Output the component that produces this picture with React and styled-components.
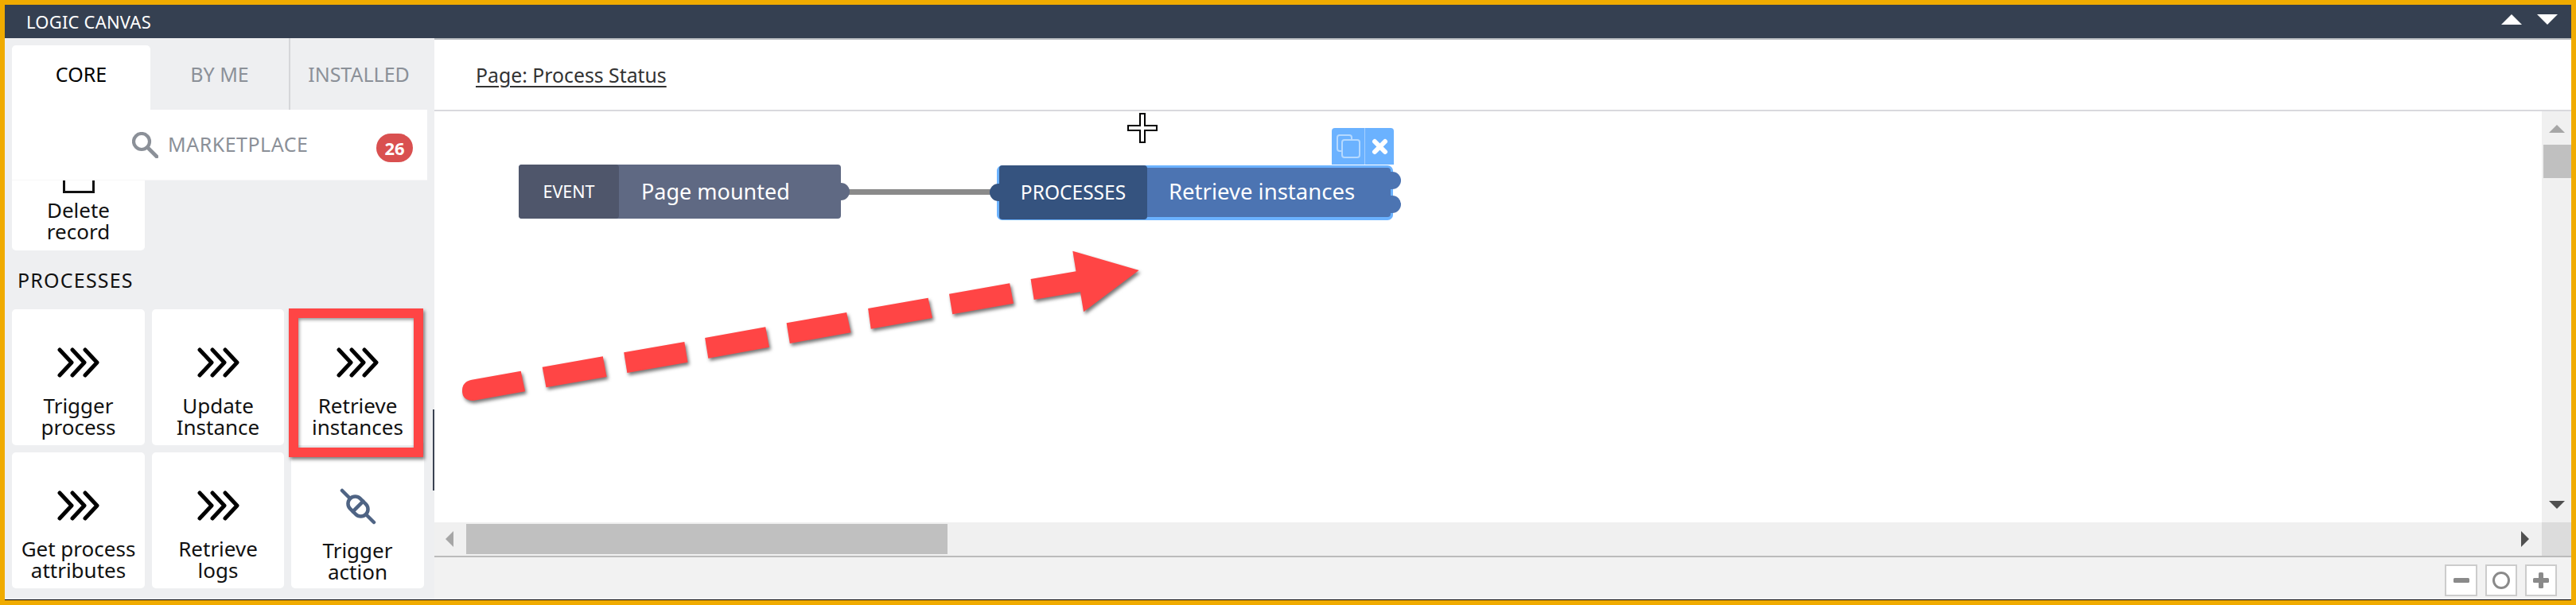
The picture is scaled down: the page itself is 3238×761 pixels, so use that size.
import React from 'react';
import styled, { createGlobalStyle } from 'styled-components';

const GlobalStyle = createGlobalStyle`
  html, body {
    margin: 0;
    padding: 0;
    background: #fff;
  }
  body {
    font-family: "Noto Sans", "Liberation Sans", sans-serif;
  }
`;

const Frame = styled.div`
  position: relative;
  box-sizing: border-box;
  width: 3238px;
  height: 761px;
  border: 6px solid #f0ab00;
  display: flex;
  flex-direction: column;
  overflow: hidden;
`;

const Header = styled.header`
  flex: 0 0 42px;
  background: #354051;
  color: #fff;
  display: flex;
  align-items: center;
  justify-content: space-between;
  padding: 0 17px 0 27px;
  font-size: 22px;
  letter-spacing: 0.2px;
`;

const HeaderArrows = styled.div`
  display: flex;
  gap: 19px;
  margin-top: -6px;
`;

const Tri = styled.span`
  display: block;
  width: 0;
  height: 0;
  border-left: 13px solid transparent;
  border-right: 13px solid transparent;
  ${(p) => (p.$down ? 'border-top: 13px solid #fff;' : 'border-bottom: 13px solid #fff;')}
`;

const Body = styled.div`
  flex: 1;
  display: flex;
  min-height: 0;
  border-bottom: 1px solid #000;
`;

const Sidebar = styled.aside`
  position: relative;
  flex: 0 0 540px;
  background: #eeeff1;
  display: flex;
  flex-direction: column;
  overflow: hidden;
`;

const TabRow = styled.div`
  flex: 0 0 90px;
  display: flex;
  margin-left: 9px;
  width: 522px;
`;

const Tab = styled.div`
  box-sizing: border-box;
  width: ${(p) => p.$width}px;
  display: flex;
  align-items: center;
  justify-content: center;
  font-size: 25px;
  color: ${(p) => (p.$active ? '#000' : '#8b9098')};
  ${(p) => p.$active && 'background: #fff; margin-top: 9px; border-radius: 5px 5px 0 0; padding-bottom: 9px;'}
  ${(p) => p.$divider && 'border-right: 2px solid #d5d6d9;'}
`;

const SearchPanel = styled.div`
  flex: 0 0 89px;
  position: relative;
  z-index: 1;
  margin-left: 9px;
  width: 522px;
  background: #fff;
  display: flex;
  align-items: center;
  padding-left: 151px;
  box-sizing: border-box;
  border-bottom: 1px solid #f7f7f8;
  color: #8b9098;
  font-size: 25px;
`;

const SearchLabel = styled.span`
  margin-left: 12px;
  margin-top: -2px;
  letter-spacing: 0.5px;
`;

const Badge = styled.span`
  margin: 7px 18px 0 auto;
  width: 46px;
  height: 36px;
  border-radius: 18px;
  background: #d95050;
  color: #fff;
  font-size: 22px;
  font-weight: 700;
  display: flex;
  align-items: center;
  justify-content: center;
`;

const List = styled.div`
  flex: 1;
  min-height: 0;
  overflow: hidden;
  padding: 0 4px 0 9px;
`;

const Grid = styled.div`
  display: grid;
  grid-template-columns: 167px 166px 167px;
  gap: 9px;
  ${(p) => p.$scrolled && 'margin-top: -83px;'}
`;

const SectionLabel = styled.div`
  height: 74px;
  display: flex;
  align-items: center;
  padding-left: 7px;
  font-size: 25px;
  letter-spacing: 1.2px;
  color: #111;
`;

const Card = styled.div`
  position: relative;
  height: 171px;
  background: #fff;
  border-radius: 5px;
  display: flex;
  flex-direction: column;
  align-items: center;
  box-sizing: border-box;
  padding-top: ${(p) => p.$top || 47}px;
`;

const CardLabel = styled.div`
  margin-top: ${(p) => p.$gap || 21}px;
  width: 100%;
  text-align: center;
  font-size: 26px;
  line-height: 27px;
  color: #111;
  white-space: pre-line;
`;

const Highlight = styled.div`
  position: absolute;
  left: -3px;
  top: -1px;
  width: 169px;
  height: 187px;
  box-sizing: border-box;
  border: 12.5px solid #ff4545;
  box-shadow: 2px 3px 4px rgba(0, 0, 0, 0.5), inset 1px 2px 4px rgba(0, 0, 0, 0.45);
  z-index: 2;
`;

const SideThumb = styled.div`
  position: absolute;
  right: 0;
  top: 467px;
  width: 2px;
  height: 102px;
  background: #3a4252;
`;

const Main = styled.main`
  flex: 1;
  min-width: 0;
  display: flex;
  flex-direction: column;
  border-top: 2px solid #b9bcc0;
`;

const TopBar = styled.div`
  flex: 0 0 88px;
  border-bottom: 2px solid #d9d9dd;
  display: flex;
  align-items: center;
  padding-left: 52px;
`;

const PageLink = styled.a`
  font-size: 24.8px;
  color: #333;
  text-decoration: underline;
  text-decoration-thickness: 2px;
  text-underline-offset: 4px;
`;

const CanvasRow = styled.div`
  flex: 0 0 517px;
  display: flex;
  min-height: 0;
`;

const Canvas = styled.div`
  position: relative;
  flex: 1;
  background: #fff;
`;

const VScroll = styled.div`
  flex: 0 0 37px;
  background: #f0f0f0;
  display: flex;
  flex-direction: column;
  align-items: center;
  padding-top: 17px;
  box-sizing: border-box;
`;

const ArrowV = styled.span`
  display: block;
  width: 0;
  height: 0;
  border-left: 10px solid transparent;
  border-right: 10px solid transparent;
  ${(p) => (p.$down ? 'border-top: 10px solid #505050;' : 'border-bottom: 10px solid #a6a6a6;')}
  ${(p) => p.$down && 'margin-top: auto; margin-bottom: 17px;'}
`;

const VThumb = styled.div`
  align-self: flex-end;
  width: 35px;
  height: 42px;
  margin-top: 15px;
  background: #c0c0c0;
`;

const HScroll = styled.div`
  flex: 0 0 44px;
  box-sizing: border-box;
  background: #f0f0f0;
  border-bottom: 2px solid #bbb;
  display: flex;
  align-items: center;
`;

const ArrowH = styled.span`
  display: block;
  width: 0;
  height: 0;
  border-top: 10px solid transparent;
  border-bottom: 10px solid transparent;
  ${(p) => (p.$right ? 'border-left: 10px solid #505050;' : 'border-right: 10px solid #a6a6a6;')}
`;

const HThumb = styled.div`
  width: 605px;
  height: 38px;
  margin-left: 16px;
  background: #c0c0c0;
`;

const HTrack = styled.div`
  flex: 1;
  display: flex;
  align-items: center;
  padding-left: 14px;
`;

const HRight = styled.div`
  margin-left: auto;
  margin-right: 16px;
`;

const Corner = styled.div`
  flex: 0 0 37px;
  height: 100%;
  background: #dcdcdc;
`;

const ZoomBar = styled.div`
  flex: 1;
  background: #f2f2f2;
  display: flex;
  justify-content: flex-end;
  align-items: flex-start;
  gap: 10px;
  padding: 9px 18px 0 0;
`;

const ZoomButton = styled.button`
  box-sizing: border-box;
  width: ${(p) => p.$width || 40}px;
  height: 40px;
  padding: 0;
  background: #fff;
  border: 2px solid #ccc;
  display: flex;
  align-items: center;
  justify-content: center;
`;

const Node = styled.div`
  position: absolute;
  left: ${(p) => p.$x}px;
  top: ${(p) => p.$y}px;
  width: ${(p) => p.$w}px;
  height: ${(p) => p.$h}px;
  box-sizing: border-box;
  display: flex;
  align-items: stretch;
  color: #fff;
  background: ${(p) => p.$bg};
  border-radius: 4px;
  ${(p) => p.$selected && 'box-shadow: 0 0 0 3px #6bb2ff, 0 1px 0 3px #6bb2ff;'}
`;

const NodeTag = styled.div`
  flex: 0 0 ${(p) => p.$w}px;
  margin: ${(p) => p.$inset || 0}px 0;
  padding-bottom: 2px;
  display: flex;
  align-items: center;
  justify-content: center;
  background: ${(p) => p.$bg};
  border-radius: 4px;
  font-size: ${(p) => p.$size || 21.5}px;
`;

const NodeTitle = styled.div`
  display: flex;
  align-items: center;
  padding: 0 0 ${(p) => p.$lift}px ${(p) => p.$pad}px;
  font-size: ${(p) => p.$size}px;
  white-space: nowrap;
`;

const Port = styled.span`
  position: absolute;
  top: ${(p) => p.$top}px;
  width: 13px;
  height: 22px;
  background: ${(p) => p.$bg};
  ${(p) =>
    p.$left
      ? 'left: -12px; border-radius: 11px 0 0 11px;'
      : `right: -${p.$out || 13}px; border-radius: 0 11px 11px 0;`}
`;

const Wire = styled.div`
  position: absolute;
  left: 520px;
  top: 98px;
  width: 190px;
  height: 7px;
  background: #8a8a8a;
`;

const NodeTools = styled.div`
  position: absolute;
  left: 1128px;
  top: 21px;
  width: 78px;
  height: 46px;
  background: #6bb2ff;
  border-radius: 4px 4px 0 0;
  display: flex;
`;

const NodeTool = styled.div`
  flex: ${(p) => p.$grow};
  display: flex;
  align-items: center;
  justify-content: center;
  ${(p) => p.$divider && 'border-right: 1px solid #a5d0ff;'}
`;

const Crosshair = styled.svg`
  position: absolute;
  left: 871px;
  top: 2px;
`;

const ArrowOverlay = styled.svg`
  position: absolute;
  left: 524px;
  top: 294px;
  z-index: 3;
  pointer-events: none;
  filter: drop-shadow(2px 3px 2px rgba(0, 0, 0, 0.55));
`;

const Chevrons = () => (
  <svg width="53" height="38" viewBox="0 0 53 38" fill="none" stroke="#000" strokeWidth="5" strokeLinecap="round" strokeLinejoin="round">
    <polyline points="3,3 18,19 3,35" />
    <polyline points="19,3 34,19 19,35" />
    <polyline points="35,3 50,19 35,35" />
  </svg>
);

const PlugIcon = () => (
  <svg width="46" height="46" viewBox="0 0 46 46" fill="none" stroke="#4f6484" strokeWidth="4.5" strokeLinecap="round">
    <line x1="3" y1="3" x2="13" y2="13" />
    <line x1="33" y1="33" x2="43" y2="43" />
    <rect x="9" y="14" width="28" height="18" rx="9" transform="rotate(45 23 23)" />
    <line x1="16.6" y1="29.4" x2="29.4" y2="16.6" />
  </svg>
);

const SearchIcon = () => (
  <svg width="33" height="33" viewBox="0 0 33 33" fill="none" stroke="#8b9098" strokeWidth="4.2">
    <circle cx="12" cy="12" r="10" />
    <line x1="19.5" y1="19.5" x2="31" y2="31" strokeWidth="4.6" strokeLinecap="round" />
  </svg>
);

const DeleteIcon = () => (
  <svg width="40" height="20" viewBox="0 0 40 20" fill="none" stroke="#111" strokeWidth="3">
    <path d="M1.5 0 V18.5 H38.5 V0" />
  </svg>
);

const CARDS = [
  'Trigger\nprocess',
  'Update\nInstance',
  'Retrieve\ninstances',
  'Get process\nattributes',
  'Retrieve\nlogs',
  'Trigger\naction',
];

const DASHES = [
  '253,485 380,445 388,522 261,562',
  '424,430 551,390 558,467 431,507',
  '594,375 721,334 729,410 601,452',
  '765,319 891,279 900,355 772,396',
  '936,264 1062,224 1071,300 942,341',
  '1106,209 1233,169 1241,245 1113,286',
  '1277,153 1372,124 1365,47 1504,120 1388,277 1381,201 1284,231',
];

const App = () => {
  return (
    <>
      <GlobalStyle />
      <Frame>
        <Header>
          <span>LOGIC CANVAS</span>
          <HeaderArrows>
            <Tri />
            <Tri $down />
          </HeaderArrows>
        </Header>
        <Body>
          <Sidebar>
            <TabRow>
              <Tab $width={174} $active>CORE</Tab>
              <Tab $width={176} $divider>BY ME</Tab>
              <Tab $width={172}>INSTALLED</Tab>
            </TabRow>
            <SearchPanel>
              <SearchIcon />
              <SearchLabel>MARKETPLACE</SearchLabel>
              <Badge>26</Badge>
            </SearchPanel>
            <List>
              <Grid $scrolled>
                <Card $top={79}>
                  <DeleteIcon />
                  <CardLabel $gap={8}>{'Delete\nrecord'}</CardLabel>
                </Card>
              </Grid>
              <SectionLabel>PROCESSES</SectionLabel>
              <Grid>
                {CARDS.map((label, i) => (
                  <Card key={label} $top={i === 5 ? 45 : 48}>
                    {i === 5 ? <PlugIcon /> : <Chevrons />}
                    <CardLabel $gap={i === 5 ? 19 : 22}>{label}</CardLabel>
                    {i === 2 && <Highlight />}
                  </Card>
                ))}
              </Grid>
            </List>
            <SideThumb />
          </Sidebar>
          <Main>
            <TopBar>
              <PageLink>Page: Process Status</PageLink>
            </TopBar>
            <CanvasRow>
              <Canvas>
                <Wire />
                <Node $x={106} $y={67} $w={405} $h={68} $bg="#5f6983">
                  <NodeTag $w={126} $bg="#4f566b">EVENT</NodeTag>
                  <NodeTitle $pad={28} $lift={1} $size={27}>Page mounted</NodeTitle>
                  <Port $top={23} $out={11} $bg="#5f6983" />
                </Node>
                <Node $x={710} $y={71} $w={492} $h={62} $bg="#4c74b2" $selected>
                  <NodeTag $w={186} $inset={-3} $size={24.5} $bg="#35537f">PROCESSES</NodeTag>
                  <NodeTitle $pad={27} $lift={3} $size={27.5}>Retrieve instances</NodeTitle>
                  <Port $left $top={20} $bg="#35537f" />
                  <Port $top={5} $bg="#4c74b2" />
                  <Port $top={35} $bg="#4c74b2" />
                </Node>
                <NodeTools>
                  <NodeTool $grow={42} $divider>
                    <svg width="30" height="30" viewBox="0 0 30 30" fill="none" stroke="#b5d9ff" strokeWidth="2">
                      <path d="M6 21 H4 a3 3 0 0 1 -3 -3 V4 a3 3 0 0 1 3 -3 H16 a3 3 0 0 1 3 3 V6" />
                      <rect x="7" y="7" width="22" height="22" rx="3" />
                    </svg>
                  </NodeTool>
                  <NodeTool $grow={36}>
                    <svg width="21" height="21" viewBox="0 0 21 21" stroke="#fff" strokeWidth="6" strokeLinecap="round">
                      <line x1="4" y1="4" x2="17" y2="17" />
                      <line x1="17" y1="4" x2="4" y2="17" />
                    </svg>
                  </NodeTool>
                </NodeTools>
                <Crosshair width="38" height="38" viewBox="0 0 38 38">
                  <path d="M16 1 H22 V16 H37 V22 H22 V37 H16 V22 H1 V16 H16 Z" fill="#fff" stroke="#000" strokeWidth="2" />
                </Crosshair>
              </Canvas>
              <VScroll>
                <ArrowV />
                <VThumb />
                <ArrowV $down />
              </VScroll>
            </CanvasRow>
            <HScroll>
              <HTrack>
                <ArrowH />
                <HThumb />
                <HRight>
                  <ArrowH $right />
                </HRight>
              </HTrack>
              <Corner />
            </HScroll>
            <ZoomBar>
              <ZoomButton $width={41}>
                <svg width="20" height="6"><rect width="20" height="6" rx="1.5" fill="#8a8a8a" /></svg>
              </ZoomButton>
              <ZoomButton>
                <svg width="22" height="22" fill="none" stroke="#8a8a8a" strokeWidth="3"><circle cx="11" cy="11" r="9.5" /></svg>
              </ZoomButton>
              <ZoomButton>
                <svg width="20" height="20" fill="#8a8a8a"><rect y="7" width="20" height="6" rx="1.5" /><rect x="7" width="6" height="20" rx="1.5" /></svg>
              </ZoomButton>
            </ZoomBar>
          </Main>
        </Body>
        <ArrowOverlay width="940" height="240" viewBox="0 0 1568 720" preserveAspectRatio="none">
          <g fill="#ff4545">
            <path d="M105 533 L208 500 L217 577 L108 612 Q85 610 85 575 Q85 540 105 533 Z" />
            {DASHES.map((points) => (
              <polygon key={points} points={points} />
            ))}
          </g>
        </ArrowOverlay>
      </Frame>
    </>
  );
};

export default App;
